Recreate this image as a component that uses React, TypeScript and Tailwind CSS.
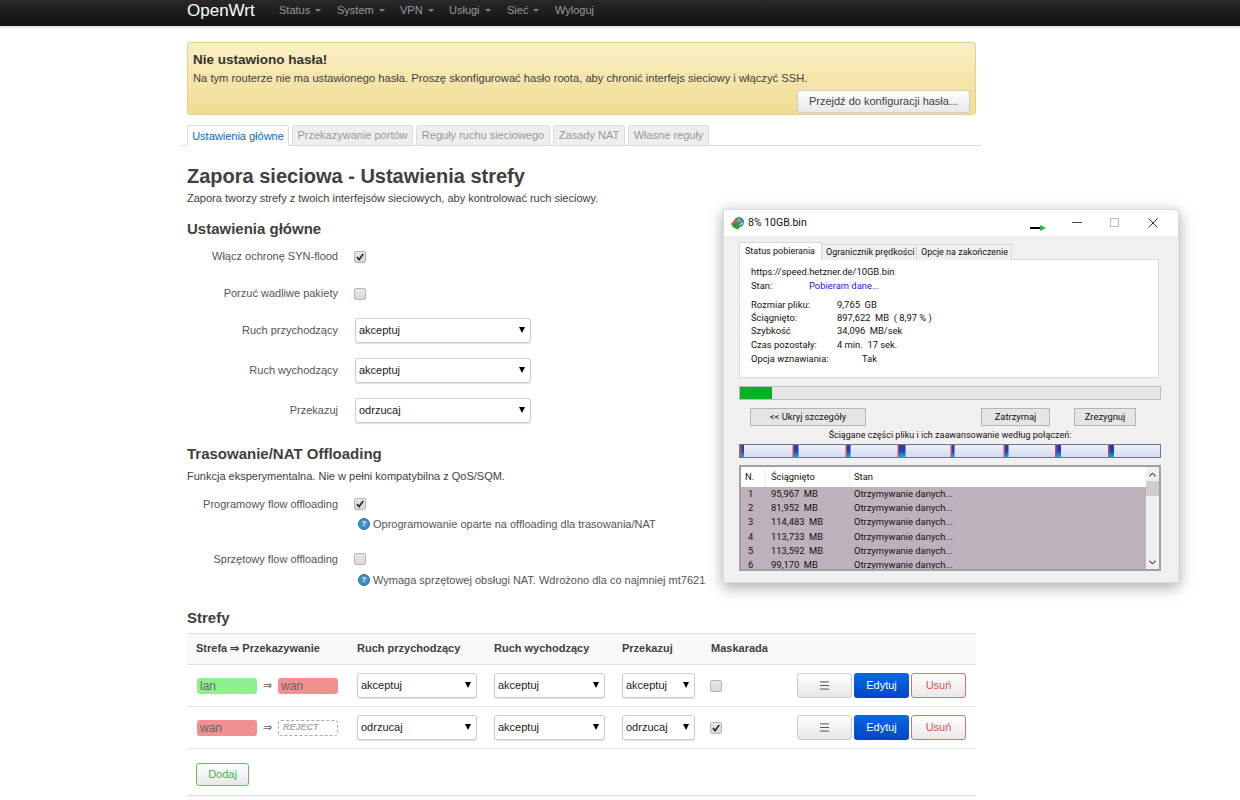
import React from 'react';

const Caret = () => (
  <span className="inline-block ml-[5px] w-0 h-0 border-x-[3px] border-x-transparent border-t-[3px] border-t-[#808080] align-middle" />
);

const Check = () => (
  <svg viewBox="0 0 10 10" className="w-[10px] h-[10px]">
    <path d="M2 5.2 L4.1 7.6 L8.2 2" fill="none" stroke="#333" strokeWidth="1.8" />
  </svg>
);

const Checkbox = ({ checked }: { checked?: boolean }) => (
  <span className="flex items-center justify-center w-[10px] h-[10px] box-content rounded-[2px] border border-[#b5b5b5] bg-gradient-to-b from-[#e8e8e8] to-[#d8d8d8] -ml-px">
    {checked && <Check />}
  </span>
);

const Select = ({ value, className }: { value: string; className: string }) => (
  <div className={`flex items-center justify-between h-[25px] pl-[3px] pr-[5px] bg-white border border-[#ccc] rounded-[3px] shadow-[0_1px_1px_rgba(0,0,0,0.12)] text-[11px] text-[#222] ${className}`}>
    <span>{value}</span>
    <span className="w-0 h-0 border-x-[3px] border-x-transparent border-t-[6px] border-t-black -mt-[2px]" />
  </div>
);

const FormRow = ({ label, height, children }: { label: string; height: string; children: React.ReactNode }) => (
  <div className={`flex items-center ${height}`}>
    <label className="w-[151px] text-right text-[11px] text-[#555]">{label}</label>
    <div className="ml-[17px]">{children}</div>
  </div>
);

const Hint = ({ text }: { text: string }) => (
  <div className="flex items-center ml-[171px] h-[16px] text-[11px] text-[#555]">
    <span className="flex items-center justify-center w-[12px] h-[12px] mr-[3px] rounded-full bg-[#3c8ec8] border border-[#2a6fa5] text-white text-[8px] font-bold leading-none">?</span>
    {text}
  </div>
);

const tabs = [
  { label: 'Przekazywanie portów', w: 'w-[121px]' },
  { label: 'Reguły ruchu sieciowego', w: 'w-[134px]' },
  { label: 'Zasady NAT', w: 'w-[72px]' },
  { label: 'Własne reguły', w: 'w-[81px]' },
];

const Badge = ({ name, color }: { name: string; color: string }) => (
  <span className={`flex items-center w-[60px] h-[16px] pl-[3px] rounded-[3px] text-[12px] text-[#666] ${color}`}>{name}</span>
);

const ZoneRow = ({
  from,
  fromColor,
  to,
  toColor,
  input,
  forward,
  masq,
}: {
  from: string;
  fromColor: string;
  to?: string;
  toColor?: string;
  input: string;
  forward: string;
  masq?: boolean;
}) => (
  <div className="grid grid-cols-[161px_137px_128px_89px_86px_188px] items-center h-[42px] border-b border-[#e2e2e2]">
    <div className="flex items-center pl-[10px]">
      <Badge name={from} color={fromColor} />
      <span className="w-[21px] text-center text-[11px] text-[#666]">⇒</span>
      {to ? (
        <Badge name={to} color={toColor ?? ''} />
      ) : (
        <span className="flex items-center w-[60px] h-[16px] pl-[4px] rounded-[3px] border border-dashed border-[#aaa] text-[9px] font-bold italic text-[#aaa]">REJECT</span>
      )}
    </div>
    <Select value={input} className="w-[120px] ml-[9px]" />
    <Select value="akceptuj" className="w-[111px] ml-[9px]" />
    <Select value={forward} className="w-[73px] ml-[9px]" />
    <div className="ml-[9px]">
      <Checkbox checked={masq} />
    </div>
    <div className="flex gap-[2px] ml-[9px]">
      <button className="flex items-center justify-center w-[55px] h-[25px] border border-[#ccc] rounded-[3px] bg-gradient-to-b from-white to-[#e6e6e6] text-[#444]">
        <svg viewBox="0 0 10 10" className="w-[9px] h-[9px]">
          <path d="M0 1 H10 M0 5 H10 M0 9 H10" stroke="#444" strokeWidth="1" />
        </svg>
      </button>
      <button className="w-[55px] h-[25px] rounded-[3px] bg-gradient-to-b from-[#0668e4] to-[#0046c4] text-white text-[11px]">Edytuj</button>
      <button className="w-[55px] h-[25px] rounded-[3px] border border-[#dc7070] bg-gradient-to-b from-white to-[#e8e8e8] text-[#d9534f] text-[11px]">Usuń</button>
    </div>
  </div>
);

const segments = [0, 52.5, 105.5, 157.5, 210.5, 263.5, 315, 368];
const segmentWidths = [3, 5, 4, 7, 3, 4, 5, 5];

const SegmentBar = () => (
  <svg width="422" height="14" className="block">
    <defs>
      <linearGradient id="bar" x1="0" x2="0" y1="0" y2="1">
        <stop offset="0" stopColor="#eef1f9" />
        <stop offset="1" stopColor="#d3daee" />
      </linearGradient>
      <linearGradient id="seg" x1="0" x2="0" y1="0" y2="1">
        <stop offset="0" stopColor="#2a3fa8" />
        <stop offset="0.5" stopColor="#1a40c0" />
        <stop offset="1" stopColor="#08b0e8" />
      </linearGradient>
    </defs>
    <rect x="0.5" y="0.5" width="421" height="13" fill="url(#bar)" stroke="#6b7a90" />
    {segments.map((x, i) => (
      <g key={x}>
        <rect x={x + 2} y="1" width={segmentWidths[i]} height="12" fill="url(#seg)" />
        <rect x={x + 1} y="1" width="1.5" height="12" fill="#d8484f" />
      </g>
    ))}
  </svg>
);

const connections = [
  ['1', '95,967  MB'],
  ['2', '81,952  MB'],
  ['3', '114,483  MB'],
  ['4', '113,733  MB'],
  ['5', '113,592  MB'],
  ['6', '99,170  MB'],
];

const WinButton = ({ label, className }: { label: string; className: string }) => (
  <button className={`h-[18px] border border-[#b5b5b5] bg-[#e5e5e5] text-[#111] ${className}`}>{label}</button>
);

const InfoRow = ({ label, value, top }: { label: string; value: string; top?: string }) => (
  <div className={`flex h-[13.4px] items-center whitespace-pre ${top ?? ''}`}>
    <span className="w-[86px]">{label}</span>
    <span>{value}</span>
  </div>
);

const DownloadWindow = () => (
  <div className="absolute left-[723px] top-[209px] w-[456px] h-[374px] bg-[#f0f0f0] border border-[#dcdcdc] shadow-[0_4px_14px_rgba(0,0,0,0.35)] font-['Roboto',sans-serif] text-[9.4px] text-[#111]">
    <div className="relative flex items-center h-[26px] bg-white pl-[6px] text-[10.5px]">
      <svg viewBox="0 0 16 16" className="w-[15px] h-[15px] mr-[3px]">
        <circle cx="9.5" cy="6.5" r="5.5" fill="#2f7fd0" />
        <path d="M7 3 L11 2.5 L12 6 L8 7 Z" fill="#78b848" />
        <path d="M1 9 C2 6 4 4.5 7 5 L7.5 8 L5 9.5 Z" fill="#d8602a" />
        <path d="M1.5 9.5 L7 7.5 L8.5 11 L12 9.5 L8.5 14.5 L4 12.5 Z" fill="#2e9a34" />
        <path d="M8.5 11 L14.5 8 L13 6.5 L10.5 8.5 Z" fill="#e6d040" />
      </svg>
      8% 10GB.bin
      <div className="absolute left-[306px] top-[15px] flex items-center">
        <span className="w-[10px] h-[2px] bg-black" />
        <span className="w-0 h-0 border-y-[3px] border-y-transparent border-l-[6px] border-l-[#20c040]" />
      </div>
      <div className="absolute left-[348px] top-[12px] w-[10px] h-[1px] bg-[#444]" />
      <div className="absolute left-[386px] top-[8px] w-[9px] h-[9px] border border-[#bbb]" />
      <svg viewBox="0 0 10 10" className="absolute left-[424px] top-[8px] w-[10px] h-[10px]">
        <path d="M0.5 0.5 L9.5 9.5 M9.5 0.5 L0.5 9.5" stroke="#333" strokeWidth="1" />
      </svg>
    </div>

    <div className="flex items-end h-[23px] ml-[15px] relative top-[1px] whitespace-nowrap text-[9px]">
      <div className="flex items-center h-[18px] w-[83px] pl-[5px] bg-white border border-b-0 border-[#d9d9d9]">Status pobierania</div>
      <div className="flex items-center h-[16px] w-[95px] pl-[4px] bg-[#f0f0f0] border border-b-0 border-l-0 border-[#d9d9d9]">Ogranicznik prędkości</div>
      <div className="flex items-center h-[16px] w-[95px] pl-[4px] bg-[#f0f0f0] border border-b-0 border-l-0 border-[#d9d9d9]">Opcje na zakończenie</div>
    </div>
    <div className="ml-[15px] w-[420px] h-[119px] bg-white border border-[#d9d9d9] pl-[11px] pt-[5px]">
      <div className="h-[14px] leading-[14px]">https://speed.hetzner.de/10GB.bin</div>
      <div className="flex h-[15px] items-center">
        <span className="w-[58px]">Stan:</span>
        <span className="text-[#2020f0]">Pobieram dane...</span>
      </div>
      <InfoRow label="Rozmiar pliku:" value="9,765  GB" top="mt-[4px]" />
      <InfoRow label="Ściągnięto:" value="897,622  MB  ( 8,97 % )" />
      <InfoRow label="Szybkość" value="34,096  MB/sek" />
      <InfoRow label="Czas pozostały:" value="4 min.  17 sek." />
      <div className="flex h-[15px] items-center">
        <span className="w-[111px]">Opcja wznawiania:</span>
        <span>Tak</span>
      </div>
    </div>

    <div className="ml-[15px] mt-[8px] w-[422px] h-[14px] bg-[#e6e6e6] border border-[#bcbcbc]">
      <div className="w-[32px] h-full bg-[#06b025]" />
    </div>

    <div className="flex ml-[26px] mt-[8px]">
      <WinButton label="<< Ukryj szczegóły" className="w-[116px]" />
      <WinButton label="Zatrzymaj" className="w-[69px] ml-[115px]" />
      <WinButton label="Zrezygnuj" className="w-[62px] ml-[24px]" />
    </div>

    <div className="ml-[15px] w-[422px] text-center h-[18px] leading-[18px] text-[9px]">Ściągane części pliku i ich zaawansowanie według połączeń:</div>

    <div className="ml-[15px]">
      <SegmentBar />
    </div>

    <div className="flex ml-[15px] mt-[7px] w-[422px] h-[106px] border-2 border-[#a0a0a8] bg-white overflow-hidden">
      <div className="flex-1 overflow-hidden">
        <div className="flex items-center h-[20px] bg-white">
          <span className="w-[25px] pl-[4px] border-r border-[#eee] h-full flex items-center">N.</span>
          <span className="w-[84px] pl-[5px] border-r border-[#eee] h-full flex items-center">Ściągnięto</span>
          <span className="pl-[4px]">Stan</span>
        </div>
        {connections.map(([n, size]) => (
          <div key={n} className="flex items-center h-[14.2px] bg-[#bdb2bb] whitespace-pre">
            <span className="w-[25px] pl-[7px]">{n}</span>
            <span className="w-[84px] pl-[5px]">{size}</span>
            <span className="pl-[4px]">Otrzymywanie danych...</span>
          </div>
        ))}
      </div>
      <div className="flex flex-col items-center w-[13px] bg-[#f0f0f0]">
        <div className="flex items-center justify-center h-[14px] w-full">
          <svg viewBox="0 0 8 5" className="w-[7px] h-[5px]">
            <path d="M0.5 4.5 L4 1 L7.5 4.5" fill="none" stroke="#505050" strokeWidth="1.3" />
          </svg>
        </div>
        <div className="w-full h-[15px] bg-[#cdcdcd]" />
        <div className="flex-1" />
        <div className="flex items-center justify-center h-[14px] w-full">
          <svg viewBox="0 0 8 5" className="w-[7px] h-[5px]">
            <path d="M0.5 0.5 L4 4 L7.5 0.5" fill="none" stroke="#505050" strokeWidth="1.3" />
          </svg>
        </div>
      </div>
    </div>
  </div>
);

export default function App() {
  return (
    <div className="relative h-[800px] overflow-hidden bg-white font-['Liberation_Sans',Arial,sans-serif] text-[#404040]">
      <header className="h-[29px] border-b-2 border-[#e5e5e5] bg-gradient-to-b from-[#2a2a2a] to-[#111]">
        <div className="flex items-center h-[27px] pl-[187px] -mt-px">
          <span className="w-[92px] text-[17px] text-white -mt-[4px]">OpenWrt</span>
          <nav className="flex text-[11px] text-[#999] -mt-[5px]">
            <span className="w-[58px]">Status<Caret /></span>
            <span className="w-[63px]">System<Caret /></span>
            <span className="w-[49px]">VPN<Caret /></span>
            <span className="w-[58px]">Usługi<Caret /></span>
            <span className="w-[48px]">Sieć<Caret /></span>
            <span>Wyloguj</span>
          </nav>
        </div>
      </header>

      <main className="w-[789px] ml-[187px] h-[771px]">
        <div className="mt-[14px] h-[73px] border border-[#e2d08c] rounded-[3px] bg-gradient-to-b from-[#fbefc4] to-[#f1dc92] pl-[5px] pr-[5px] pt-[9px] text-[#404040]">
          <h4 className="text-[13.5px] font-bold leading-[16px] text-[#333]">Nie ustawiono hasła!</h4>
          <p className="text-[11.2px] leading-[14px] mt-[3px]">Na tym routerze nie ma ustawionego hasła. Proszę skonfigurować hasło roota, aby chronić interfejs sieciowy i włączyć SSH.</p>
          <div className="flex justify-end mt-[5px]">
            <button className="w-[173px] h-[23px] border border-[#ccc] rounded-[3px] bg-gradient-to-b from-white to-[#e8e8e8] text-[11px] text-[#404040]">Przejdź do konfiguracji hasła...</button>
          </div>
        </div>

        <div className="flex h-[21px] mt-[10px] -mr-[5px] -ml-[7px] pl-[7px] gap-[3px] border-b border-[#ddd] whitespace-nowrap">
          <span className="flex items-center justify-center w-[102px] h-[21px] bg-white border border-b-0 border-[#ddd] rounded-t-[3px] text-[11px] text-[#0069d6]">Ustawienia główne</span>
          {tabs.map((t) => (
            <span key={t.label} className={`flex items-center justify-center ${t.w} h-[20px] bg-[#eee] border border-b-0 border-[#ddd] rounded-t-[3px] text-[11px] text-[#999]`}>{t.label}</span>
          ))}
        </div>

        <h2 className="mt-[18px] text-[20px] font-bold leading-[24px] text-[#404040]">Zapora sieciowa - Ustawienia strefy</h2>
        <p className="mt-[2px] text-[11px] leading-[16px]">Zapora tworzy strefy z twoich interfejsów sieciowych, aby kontrolować ruch sieciowy.</p>

        <h3 className="mt-[15px] text-[15px] font-bold leading-[16px] text-[#404040]">Ustawienia główne</h3>
        <div className="pt-px">
          <FormRow label="Włącz ochronę SYN-flood" height="h-[37px]"><Checkbox checked /></FormRow>
          <FormRow label="Porzuć wadliwe pakiety" height="h-[37px]"><Checkbox /></FormRow>
          <FormRow label="Ruch przychodzący" height="h-[37px]"><Select value="akceptuj" className="w-[176px]" /></FormRow>
          <FormRow label="Ruch wychodzący" height="h-[43px]"><Select value="akceptuj" className="w-[176px]" /></FormRow>
          <FormRow label="Przekazuj" height="h-[37px]"><Select value="odrzucaj" className="w-[176px]" /></FormRow>
        </div>

        <h3 className="mt-[17px] text-[15px] font-bold leading-[16px] text-[#404040]">Trasowanie/NAT Offloading</h3>
        <p className="mt-[6px] text-[11px] leading-[16px]">Funkcja eksperymentalna. Nie w pełni kompatybilna z QoS/SQM.</p>

        <div className="mt-[12px]">
          <FormRow label="Programowy flow offloading" height="h-[16px]"><Checkbox checked /></FormRow>
          <div className="mt-[4px]"><Hint text="Oprogramowanie oparte na offloading dla trasowania/NAT" /></div>
          <div className="mt-[19px]">
            <FormRow label="Sprzętowy flow offloading" height="h-[16px]"><Checkbox /></FormRow>
          </div>
          <div className="mt-[5px]"><Hint text="Wymaga sprzętowej obsługi NAT. Wdrożono dla co najmniej mt7621" /></div>
        </div>

        <h3 className="mt-[22px] text-[15px] font-bold leading-[16px] text-[#404040]">Strefy</h3>

        <div className="mt-[7px] border-t border-[#ddd]">
          <div className="grid grid-cols-[161px_137px_128px_89px_86px_188px] items-center h-[31px] pb-[2px] bg-[#f9f9f9] border-b border-[#ddd] text-[11px] font-bold text-[#404040]">
            <span className="pl-[9px]">Strefa ⇒ Przekazywanie</span>
            <span className="pl-[9px]">Ruch przychodzący</span>
            <span className="pl-[9px]">Ruch wychodzący</span>
            <span className="pl-[9px]">Przekazuj</span>
            <span className="pl-[9px]">Maskarada</span>
          </div>
          <ZoneRow from="lan" fromColor="bg-[#90f090]" to="wan" toColor="bg-[#f09090]" input="akceptuj" forward="akceptuj" />
          <ZoneRow from="wan" fromColor="bg-[#f09090]" input="odrzucaj" forward="odrzucaj" masq />
        </div>

        <button className="mt-[14px] ml-[9px] w-[53px] h-[23px] rounded-[3px] border border-[#6cb86c] bg-gradient-to-b from-white to-[#e8e8e8] text-[11px] text-[#4cae4c]">Dodaj</button>
      </main>

      <div className="absolute left-[187px] top-[795px] w-[789px] h-[5px] border-t border-[#ddd] bg-[#f9f9f9]" />

      <DownloadWindow />
    </div>
  );
}
